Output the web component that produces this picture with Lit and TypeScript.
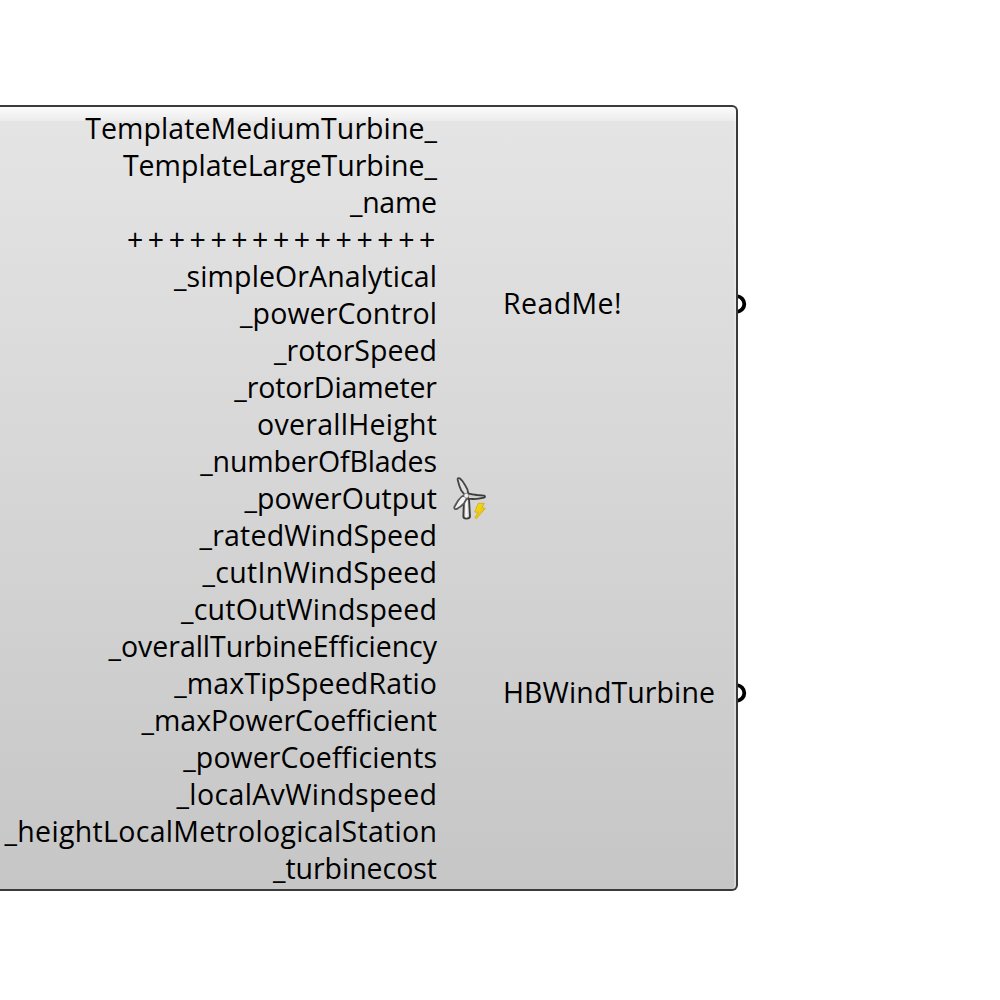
import { LitElement, html, css, svg } from "lit";
import { customElement, property } from "lit/decorators.js";

interface Port {
  label: string;
  /** Advance width of the label, in pixels. */
  width: number;
  /** Gap between the label and the right edge of its column, in pixels. */
  inset?: number;
}

const INPUTS: Port[] = [
  { label: "TemplateMediumTurbine_", width: 351.8 },
  { label: "TemplateLargeTurbine_", width: 314.1 },
  { label: "_name", width: 87 },
  { label: "+++++++++++++++", width: 308.5, inset: 1.6 },
  { label: "_simpleOrAnalytical", width: 263 },
  { label: "_powerControl", width: 197 },
  { label: "_rotorSpeed", width: 163 },
  { label: "_rotorDiameter", width: 202.7 },
  { label: "overallHeight", width: 180 },
  { label: "_numberOfBlades", width: 236.7 },
  { label: "_powerOutput", width: 192.5 },
  { label: "_ratedWindSpeed", width: 237.5 },
  { label: "_cutInWindSpeed", width: 234.5 },
  { label: "_cutOutWindspeed", width: 256 },
  { label: "_overallTurbineEfficiency", width: 328.5 },
  { label: "_maxTipSpeedRatio", width: 262.8 },
  { label: "_maxPowerCoefficient", width: 295.5 },
  { label: "_powerCoefficients", width: 253.7 },
  { label: "_localAvWindspeed", width: 260.5 },
  { label: "_heightLocalMetrologicalStation", width: 432.5 },
  { label: "_turbinecost", width: 164 },
];

const OUTPUTS: Port[] = [
  { label: "ReadMe!", width: 118.5 },
  { label: "HBWindTurbine", width: 212 },
];

/** A label whose tracking is adjusted so that it spans the given width. */
@customElement("port-label")
export class PortLabel extends LitElement {
  static styles = css`
    :host {
      display: block;
      white-space: nowrap;
    }
    .text {
      display: inline-block;
      font-variant-ligatures: none;
    }
  `;

  @property() label = "";
  @property({ type: Number }) width = 0;
  @property({ type: Number }) inset = 0;

  render() {
    return html`<span class="text">${this.label}</span>`;
  }

  updated() {
    const el = this.renderRoot.querySelector<HTMLElement>(".text")!;
    el.style.letterSpacing = "0";
    el.style.marginRight = "0";
    const natural = el.getBoundingClientRect().width;
    const tracking = (this.width - natural) / (this.label.length - 1);
    el.style.letterSpacing = `${tracking}px`;
    el.style.marginRight = `${this.inset - tracking}px`;
  }
}

@customElement("turbine-icon")
export class TurbineIcon extends LitElement {
  static styles = css`
    :host {
      display: block;
      width: 50px;
      height: 56px;
    }
    .icon {
      display: block;
    }
  `;

  render() {
    return html`<svg class="icon" width="50" height="56" viewBox="0 0 150 168">
      <defs>
        <linearGradient id="tower" x1="0" x2="1" y1="0" y2="0">
          <stop offset="0" stop-color="#a5a5a5" />
          <stop offset=".45" stop-color="#ffffff" />
          <stop offset="1" stop-color="#b4b4b4" />
        </linearGradient>
        <linearGradient id="bolt" x1="0" x2="1" y1="0" y2="1">
          <stop offset="0" stop-color="#f5e02a" />
          <stop offset="1" stop-color="#e2b800" />
        </linearGradient>
      </defs>
      ${svg`
        <path d="M57 86 L55 139 Q55 146 64 146 Q75 146 75 139 L72 86 Z" fill="url(#tower)" stroke="#3c3c3c" stroke-width="5.5" stroke-linejoin="round"/>
        <path d="M59 74 Q47 63 43 47 L38 29 Q37 23 44 25 Q52 31 60 45 Q69 58 70 71 Z" fill="#dedede" stroke="#444" stroke-width="5.5" stroke-linejoin="round"/>
        <path d="M68 70 Q82 73 96 75 L117 77 Q123 80 117 83 Q96 88 84 87 L69 86 Z" fill="#cfcfcf" stroke="#3c3c3c" stroke-width="5.5" stroke-linejoin="round"/>
        <path d="M58 75 Q47 79 39 92 L28 111 Q27 119 35 117 Q48 110 57 100 L66 85 Z" fill="#f2f2f2" stroke="#555" stroke-width="5.5" stroke-linejoin="round"/>
        <circle cx="64" cy="77" r="7" fill="#f0f0f0" stroke="#8a8a8a" stroke-width="2"/>
        <path d="M100 100 L118 100 L111 113 L121 115 L94 146 L90 143 L99 127 L89 126 Z" fill="url(#bolt)" stroke="#d8b418" stroke-width="3" stroke-linejoin="round"/>
      `}
    </svg>`;
  }
}

@customElement("app-root")
export class AppRoot extends LitElement {
  static styles = css`
    :host {
      display: block;
      box-sizing: border-box;
      width: 1000px;
      height: 1000px;
      padding-top: 105px;
      overflow: hidden;
      background: #fff;
      color: #000;
      font: 400 28.5px/37px "Open Sans", "Noto Sans", sans-serif;
    }
    .node {
      position: relative;
      box-sizing: border-box;
      display: flex;
      width: 738px;
      height: 786px;
      border: 2px solid #3a3a3a;
      border-left: 0;
      border-radius: 0 6px 6px 0;
      background: linear-gradient(#fbfbfb, #ececec) 0 0 / 100% 14px no-repeat,
        linear-gradient(#e5e5e5, #c6c6c6);
      box-shadow: inset -2px 0 0 rgba(255, 255, 255, 0.28);
    }
    .inputs {
      display: flex;
      flex-direction: column;
      align-items: flex-end;
      width: 437px;
      padding-top: 3px;
    }
    .middle {
      display: flex;
      align-items: center;
      padding: 0 0 0 8px;
    }
    .outputs {
      display: grid;
      grid-template-rows: 389px 389px;
      align-items: center;
      flex: 1;
      padding-left: 8px;
      padding-top: 2px;
    }
    .output {
      display: flex;
      align-items: center;
      justify-content: space-between;
    }
    .grip {
      position: relative;
      left: 11px;
      display: block;
    }
  `;

  render() {
    return html`
      <div class="node">
        <div class="inputs">
          ${INPUTS.map(
            (p) => html`<port-label .label=${p.label} .width=${p.width} .inset=${p.inset ?? 0}></port-label>`,
          )}
        </div>
        <div class="middle"><turbine-icon></turbine-icon></div>
        <div class="outputs">
          ${OUTPUTS.map(
            (p) => html`<div class="output">
              <port-label .label=${p.label} .width=${p.width}></port-label>
              <svg class="grip" width="9" height="20" viewBox="0 0 9 20">
                <circle cx="-1.4" cy="10" r="7.7" fill="#fff" stroke="#000" stroke-width="3.8" />
              </svg>
            </div>`,
          )}
        </div>
      </div>
    `;
  }
}
